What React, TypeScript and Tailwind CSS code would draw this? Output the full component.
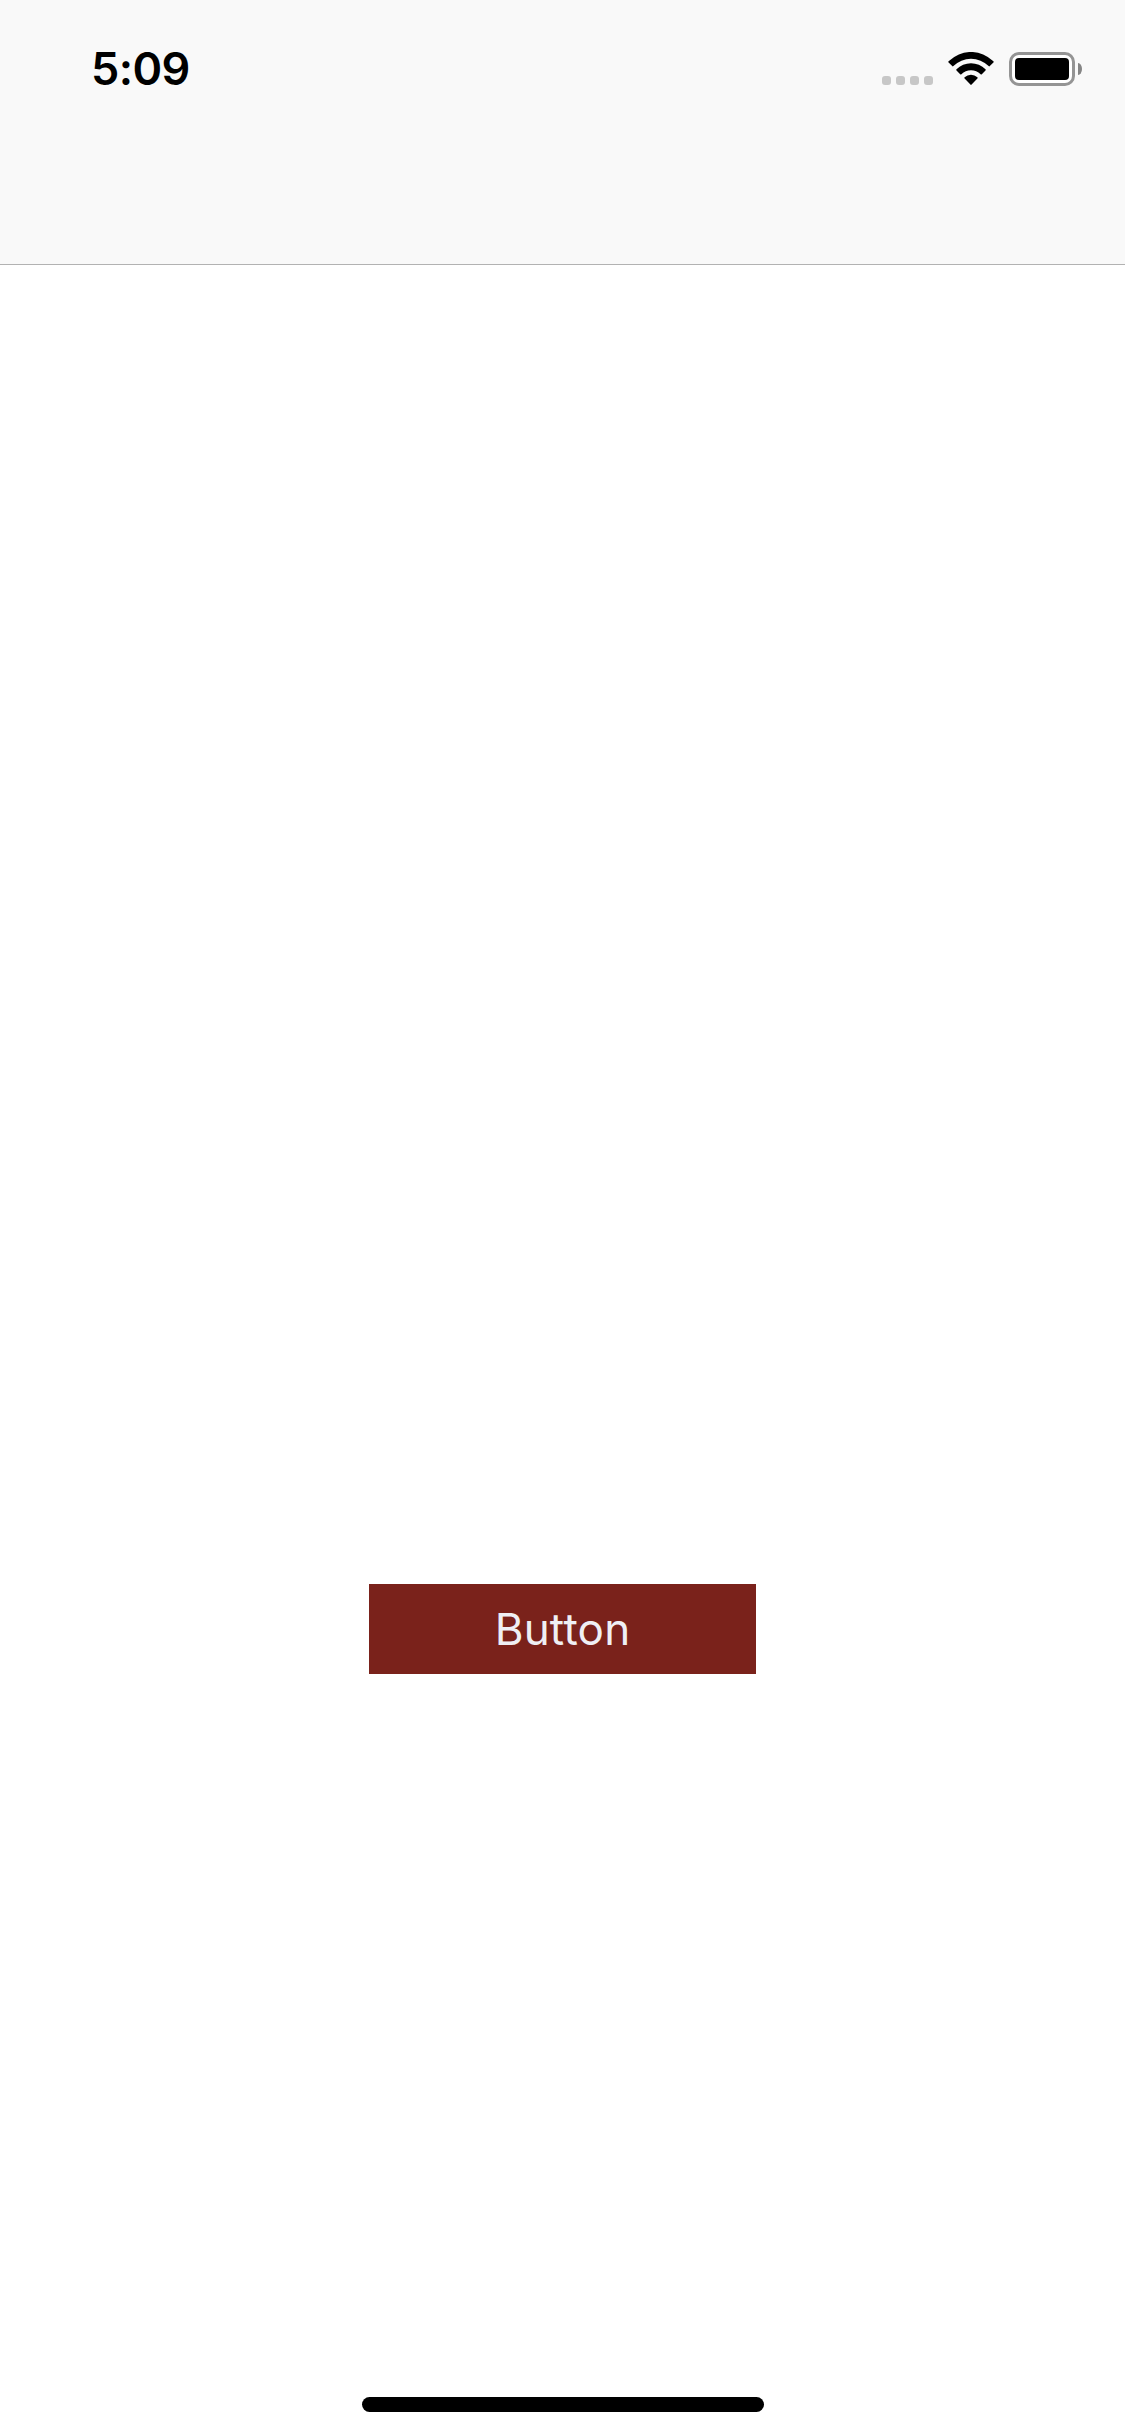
function WifiIcon() {
  return (
    <svg className="ml-[15px] h-[34px] w-[46px]" viewBox="0 0 46 34" fill="black" aria-label="Wi-Fi">
      <path d="M.6 9.3a31.5 31.5 0 0 1 44.8 0q.6.6 0 1.2l-3.6 3.6q-.6.6-1.2 0a25 25 0 0 0-35.2 0q-.6.6-1.2 0L.6 10.5q-.6-.6 0-1.2Z" />
      <path d="M8.5 17.3a20.5 20.5 0 0 1 29 0q.6.6 0 1.2l-3.7 3.7q-.6.6-1.2 0a13.8 13.8 0 0 0-19.2 0q-.6.6-1.2 0l-3.7-3.7q-.6-.6 0-1.2Z" />
      <path d="M16.6 25.3a9.4 9.4 0 0 1 12.8 0q.7.6 0 1.3l-5.8 6q-.6.6-1.2 0l-5.8-6q-.7-.7 0-1.3Z" />
    </svg>
  );
}

function Battery() {
  return (
    <div className="ml-[15px] flex items-center">
      <div className="h-[34px] w-[66px] rounded-[10px] border-[3px] border-[#949494] bg-white p-[3px]">
        <div className="h-full w-full rounded-[4px] bg-black" />
      </div>
      <div className="ml-[3px] h-3 w-1 rounded-[0_100%_100%_0/0_50%_50%_0] bg-[#858585]" />
    </div>
  );
}

export default function App() {
  return (
    <main className="flex h-[2436px] w-[1125px] flex-col items-center bg-white font-['Inter',sans-serif]">
      <header className="h-[265px] w-full border-b border-[#b2b2b2] bg-[#f9f9f9]">
        <div className="flex items-start justify-between pr-[43px] pl-[91px] pt-[52px]">
          <time className="-mt-[10px] text-[45px] leading-[54px] font-semibold tracking-[-0.6px]">5:09</time>
          <div className="flex items-start">
            <div className="mt-6 flex gap-[5px]">
              <i className="size-[9px] rounded-[3px] bg-[#c7c7c7]" />
              <i className="size-[9px] rounded-[3px] bg-[#c7c7c7]" />
              <i className="size-[9px] rounded-[3px] bg-[#c7c7c7]" />
              <i className="size-[9px] rounded-[3px] bg-[#c7c7c7]" />
            </div>
            <WifiIcon />
            <Battery />
          </div>
        </div>
      </header>
      <button className="mt-[1319px] h-[90px] w-[387px] bg-[#7a221b] text-[44px] leading-[54px] font-normal tracking-[0.2px] text-[#efeff4]">
        Button
      </button>
      <div className="mt-[723px] ml-px h-[15px] w-[402px] rounded-full bg-black" />
    </main>
  );
}
